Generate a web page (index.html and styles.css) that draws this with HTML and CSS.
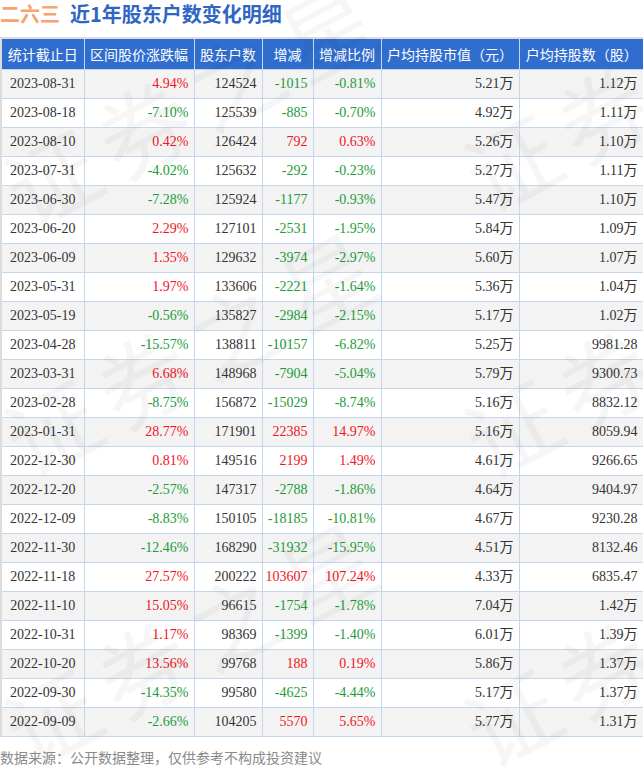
FILE: index.html
```html
<!DOCTYPE html>
<html lang="zh-CN">
<head>
<meta charset="utf-8">
<title>二六三 近1年股东户数变化明细</title>
<link rel="stylesheet" href="styles.css">
</head>
<body>
<div class="page">
  <h1 class="title"><span class="stock">二六三</span><span class="subject">近1年股东户数变化明细</span></h1>
  <table class="data">
    <colgroup>
      <col class="c1"><col class="c2"><col class="c3"><col class="c4"><col class="c5"><col class="c6"><col class="c7">
    </colgroup>
    <thead>
      <tr><th>统计截止日</th><th>区间股价涨跌幅</th><th>股东户数</th><th>增减</th><th>增减比例</th><th>户均持股市值（元）</th><th>户均持股数（股）</th></tr>
    </thead>
    <tbody>
      <tr><td>2023-08-31</td><td class="up">4.94%</td><td>124524</td><td class="dn">-1015</td><td class="dn">-0.81%</td><td>5.21万</td><td>1.12万</td></tr>
      <tr><td>2023-08-18</td><td class="dn">-7.10%</td><td>125539</td><td class="dn">-885</td><td class="dn">-0.70%</td><td>4.92万</td><td>1.11万</td></tr>
      <tr><td>2023-08-10</td><td class="up">0.42%</td><td>126424</td><td class="up">792</td><td class="up">0.63%</td><td>5.26万</td><td>1.10万</td></tr>
      <tr><td>2023-07-31</td><td class="dn">-4.02%</td><td>125632</td><td class="dn">-292</td><td class="dn">-0.23%</td><td>5.27万</td><td>1.11万</td></tr>
      <tr><td>2023-06-30</td><td class="dn">-7.28%</td><td>125924</td><td class="dn">-1177</td><td class="dn">-0.93%</td><td>5.47万</td><td>1.10万</td></tr>
      <tr><td>2023-06-20</td><td class="up">2.29%</td><td>127101</td><td class="dn">-2531</td><td class="dn">-1.95%</td><td>5.84万</td><td>1.09万</td></tr>
      <tr><td>2023-06-09</td><td class="up">1.35%</td><td>129632</td><td class="dn">-3974</td><td class="dn">-2.97%</td><td>5.60万</td><td>1.07万</td></tr>
      <tr><td>2023-05-31</td><td class="up">1.97%</td><td>133606</td><td class="dn">-2221</td><td class="dn">-1.64%</td><td>5.36万</td><td>1.04万</td></tr>
      <tr><td>2023-05-19</td><td class="dn">-0.56%</td><td>135827</td><td class="dn">-2984</td><td class="dn">-2.15%</td><td>5.17万</td><td>1.02万</td></tr>
      <tr><td>2023-04-28</td><td class="dn">-15.57%</td><td>138811</td><td class="dn">-10157</td><td class="dn">-6.82%</td><td>5.25万</td><td>9981.28</td></tr>
      <tr><td>2023-03-31</td><td class="up">6.68%</td><td>148968</td><td class="dn">-7904</td><td class="dn">-5.04%</td><td>5.79万</td><td>9300.73</td></tr>
      <tr><td>2023-02-28</td><td class="dn">-8.75%</td><td>156872</td><td class="dn">-15029</td><td class="dn">-8.74%</td><td>5.16万</td><td>8832.12</td></tr>
      <tr><td>2023-01-31</td><td class="up">28.77%</td><td>171901</td><td class="up">22385</td><td class="up">14.97%</td><td>5.16万</td><td>8059.94</td></tr>
      <tr><td>2022-12-30</td><td class="up">0.81%</td><td>149516</td><td class="up">2199</td><td class="up">1.49%</td><td>4.61万</td><td>9266.65</td></tr>
      <tr><td>2022-12-20</td><td class="dn">-2.57%</td><td>147317</td><td class="dn">-2788</td><td class="dn">-1.86%</td><td>4.64万</td><td>9404.97</td></tr>
      <tr><td>2022-12-09</td><td class="dn">-8.83%</td><td>150105</td><td class="dn">-18185</td><td class="dn">-10.81%</td><td>4.67万</td><td>9230.28</td></tr>
      <tr><td>2022-11-30</td><td class="dn">-12.46%</td><td>168290</td><td class="dn">-31932</td><td class="dn">-15.95%</td><td>4.51万</td><td>8132.46</td></tr>
      <tr><td>2022-11-18</td><td class="up">27.57%</td><td>200222</td><td class="up">103607</td><td class="up">107.24%</td><td>4.33万</td><td>6835.47</td></tr>
      <tr><td>2022-11-10</td><td class="up">15.05%</td><td>96615</td><td class="dn">-1754</td><td class="dn">-1.78%</td><td>7.04万</td><td>1.42万</td></tr>
      <tr><td>2022-10-31</td><td class="up">1.17%</td><td>98369</td><td class="dn">-1399</td><td class="dn">-1.40%</td><td>6.01万</td><td>1.39万</td></tr>
      <tr><td>2022-10-20</td><td class="up">13.56%</td><td>99768</td><td class="up">188</td><td class="up">0.19%</td><td>5.86万</td><td>1.37万</td></tr>
      <tr><td>2022-09-30</td><td class="dn">-14.35%</td><td>99580</td><td class="dn">-4625</td><td class="dn">-4.44%</td><td>5.17万</td><td>1.37万</td></tr>
      <tr><td>2022-09-09</td><td class="dn">-2.66%</td><td>104205</td><td class="up">5570</td><td class="up">5.65%</td><td>5.77万</td><td>1.31万</td></tr>
    </tbody>
  </table>
  <p class="source">数据来源：公开数据整理，仅供参考不构成投资建议</p>
  <div class="watermarks" aria-hidden="true">
    <span class="wm wm1">证券之星</span>
    <span class="wm wm2">证券之星</span>
    <span class="wm wm3">证券之星</span>
    <span class="wm wm4">证券之星</span>
    <span class="wm wm5">证券之星</span>
    <span class="wm wm6">证券之星</span>
  </div>
</div>
</body>
</html>
```

FILE: styles.css
```css
html, body {
  margin: 0;
  padding: 0;
  background: #ffffff;
}

.page {
  position: relative;
  width: 643px;
  height: 767px;
  overflow: hidden;
  font-family: "Noto Sans CJK SC", "Noto Sans", sans-serif;
}

.title {
  margin: 0;
  height: 37px;
  box-sizing: border-box;
  padding-top: 1px;
  font-size: 20px;
  line-height: 26px;
  font-weight: bold;
  display: flex;
  gap: 10px;
}

.stock {
  color: #f6a56f;
}

.subject {
  color: #2f66c2;
}

.data {
  width: 643px;
  border-collapse: collapse;
  table-layout: fixed;
  border-top: 2px solid #dcdcdc;
  border-left: 2px solid #dcdcdc;
}

.c1 { width: 83px; }
.c2 { width: 110px; }
.c3 { width: 68px; }
.c4 { width: 51px; }
.c5 { width: 68px; }
.c6 { width: 138px; }
.c7 { width: 125px; }

.data th {
  height: 30px;
  padding: 0;
  background: #2f6dcf;
  color: #ffffff;
  font-weight: normal;
  font-size: 14px;
  line-height: 30px;
  text-align: center;
  border-left: 1px solid #c6d8f0;
  white-space: nowrap;
  box-sizing: border-box;
}

.data th:first-child {
  border-left: none;
}

.data td {
  height: 29px;
  padding: 0 5px 0 0;
  box-sizing: border-box;
  font-family: "Liberation Serif", "Noto Sans CJK SC", serif;
  font-size: 14px;
  line-height: 28px;
  color: #333333;
  text-align: right;
  border: 1px solid #c4d7ec;
  white-space: nowrap;
}

.data td:first-child {
  text-align: center;
  padding: 0;
  border-left: none;
}

.data td:last-child {
  padding-right: 6px;
}

.data tbody tr:nth-child(odd) td {
  background: #f3f3f3;
}

.data td.up {
  color: #f0141e;
}

.data td.dn {
  color: #1c9b38;
}

.source {
  margin: 11px 0 0 0;
  font-size: 14px;
  line-height: 18px;
  color: #8a8a8a;
}

.watermarks {
  position: absolute;
  inset: 0;
  pointer-events: none;
}

.wm {
  position: absolute;
  font-family: "Noto Sans CJK SC", sans-serif;
  font-size: 92px;
  line-height: 92px;
  letter-spacing: 12px;
  white-space: nowrap;
  color: rgba(0, 0, 0, 0.035);
  transform-origin: left center;
  transform: rotate(-28deg);
}

.wm1 { left: 10px; top: 150px; }
.wm2 { left: 470px; top: 135px; }
.wm3 { left: 10px; top: 400px; }
.wm4 { left: 470px; top: 400px; }
.wm5 { left: 10px; top: 690px; }
.wm6 { left: 470px; top: 690px; }
```
